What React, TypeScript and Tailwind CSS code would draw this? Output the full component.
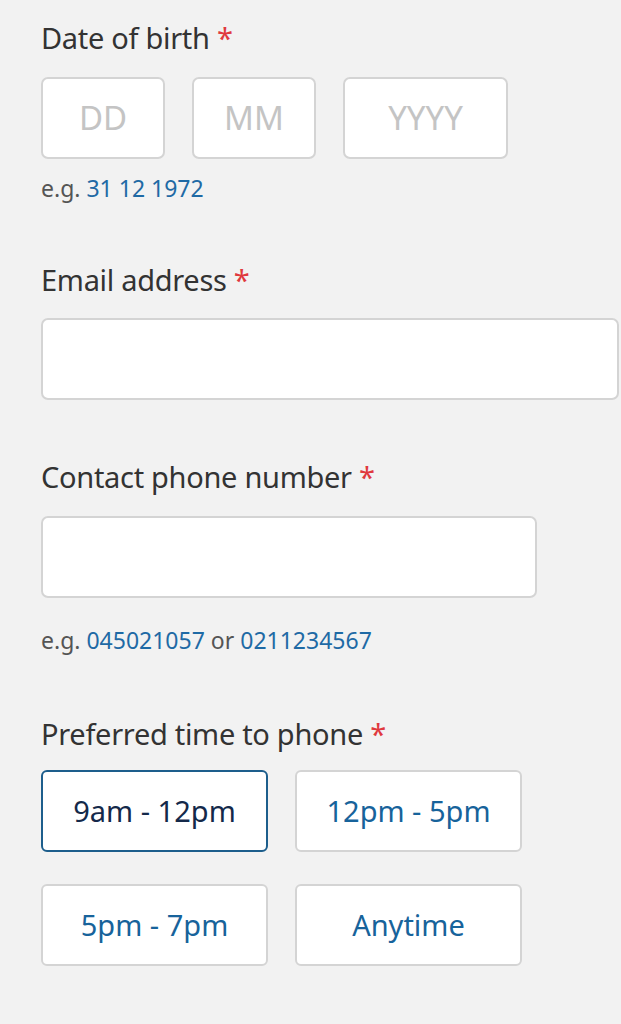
const font = { fontFamily: '"Noto Sans", "Open Sans", sans-serif' }

function Label({ children }: { children: React.ReactNode }) {
  return (
    <div className="text-[29px] leading-[36px] tracking-[-0.3px] text-[#333333]">
      {children} <span className="text-[#e0393e]">*</span>
    </div>
  )
}

function Box({ className = '', placeholder }: { className?: string; placeholder?: string }) {
  return (
    <div
      className={`flex h-[82px] items-center justify-center rounded-[7px] border-2 border-[#d4d4d4] bg-white text-[33px] text-[#c4c4c4] ${className}`}
    >
      {placeholder}
    </div>
  )
}

function Choice({ label, selected = false }: { label: string; selected?: boolean }) {
  return (
    <button
      className={`flex h-[82px] w-[227px] items-center justify-center rounded-[6px] border-2 bg-white text-[29px] ${
        selected ? 'border-[#1d5e8c] text-[#14294a]' : 'border-[#d4d4d4] text-[#17639b]'
      }`}
    >
      {label}
    </button>
  )
}

export default function App() {
  return (
    <div className="min-h-[1024px] bg-[#f2f2f2] pl-[41px] pt-[20px]" style={font}>
      <Label>Date of birth</Label>
      <div className="mt-[21px] flex gap-[27px]">
        <Box className="w-[124px]" placeholder="DD" />
        <Box className="w-[124px]" placeholder="MM" />
        <Box className="w-[165px]" placeholder="YYYY" />
      </div>
      <p className="mt-[14px] text-[23px] leading-[30px] text-[#555555]">
        e.g. <span className="text-[#1f6aa5]">31 12 1972</span>
      </p>

      <div className="mt-[59px]">
        <Label>Email address</Label>
      </div>
      <Box className="mt-[20px] w-[578px]" />

      <div className="mt-[59px]">
        <Label>Contact phone number</Label>
      </div>
      <Box className="mt-[21px] w-[496px]" />
      <p className="mt-[27px] text-[23px] leading-[30px] text-[#555555]">
        e.g. <span className="text-[#1f6aa5]">045021057</span> or{' '}
        <span className="text-[#1f6aa5]">0211234567</span>
      </p>

      <div className="mt-[61px]">
        <Label>Preferred time to phone</Label>
      </div>
      <div className="mt-[18px] grid w-[481px] grid-cols-2 gap-x-[27px] gap-y-[32px]">
        <Choice label="9am - 12pm" selected />
        <Choice label="12pm - 5pm" />
        <Choice label="5pm - 7pm" />
        <Choice label="Anytime" />
      </div>
    </div>
  )
}
